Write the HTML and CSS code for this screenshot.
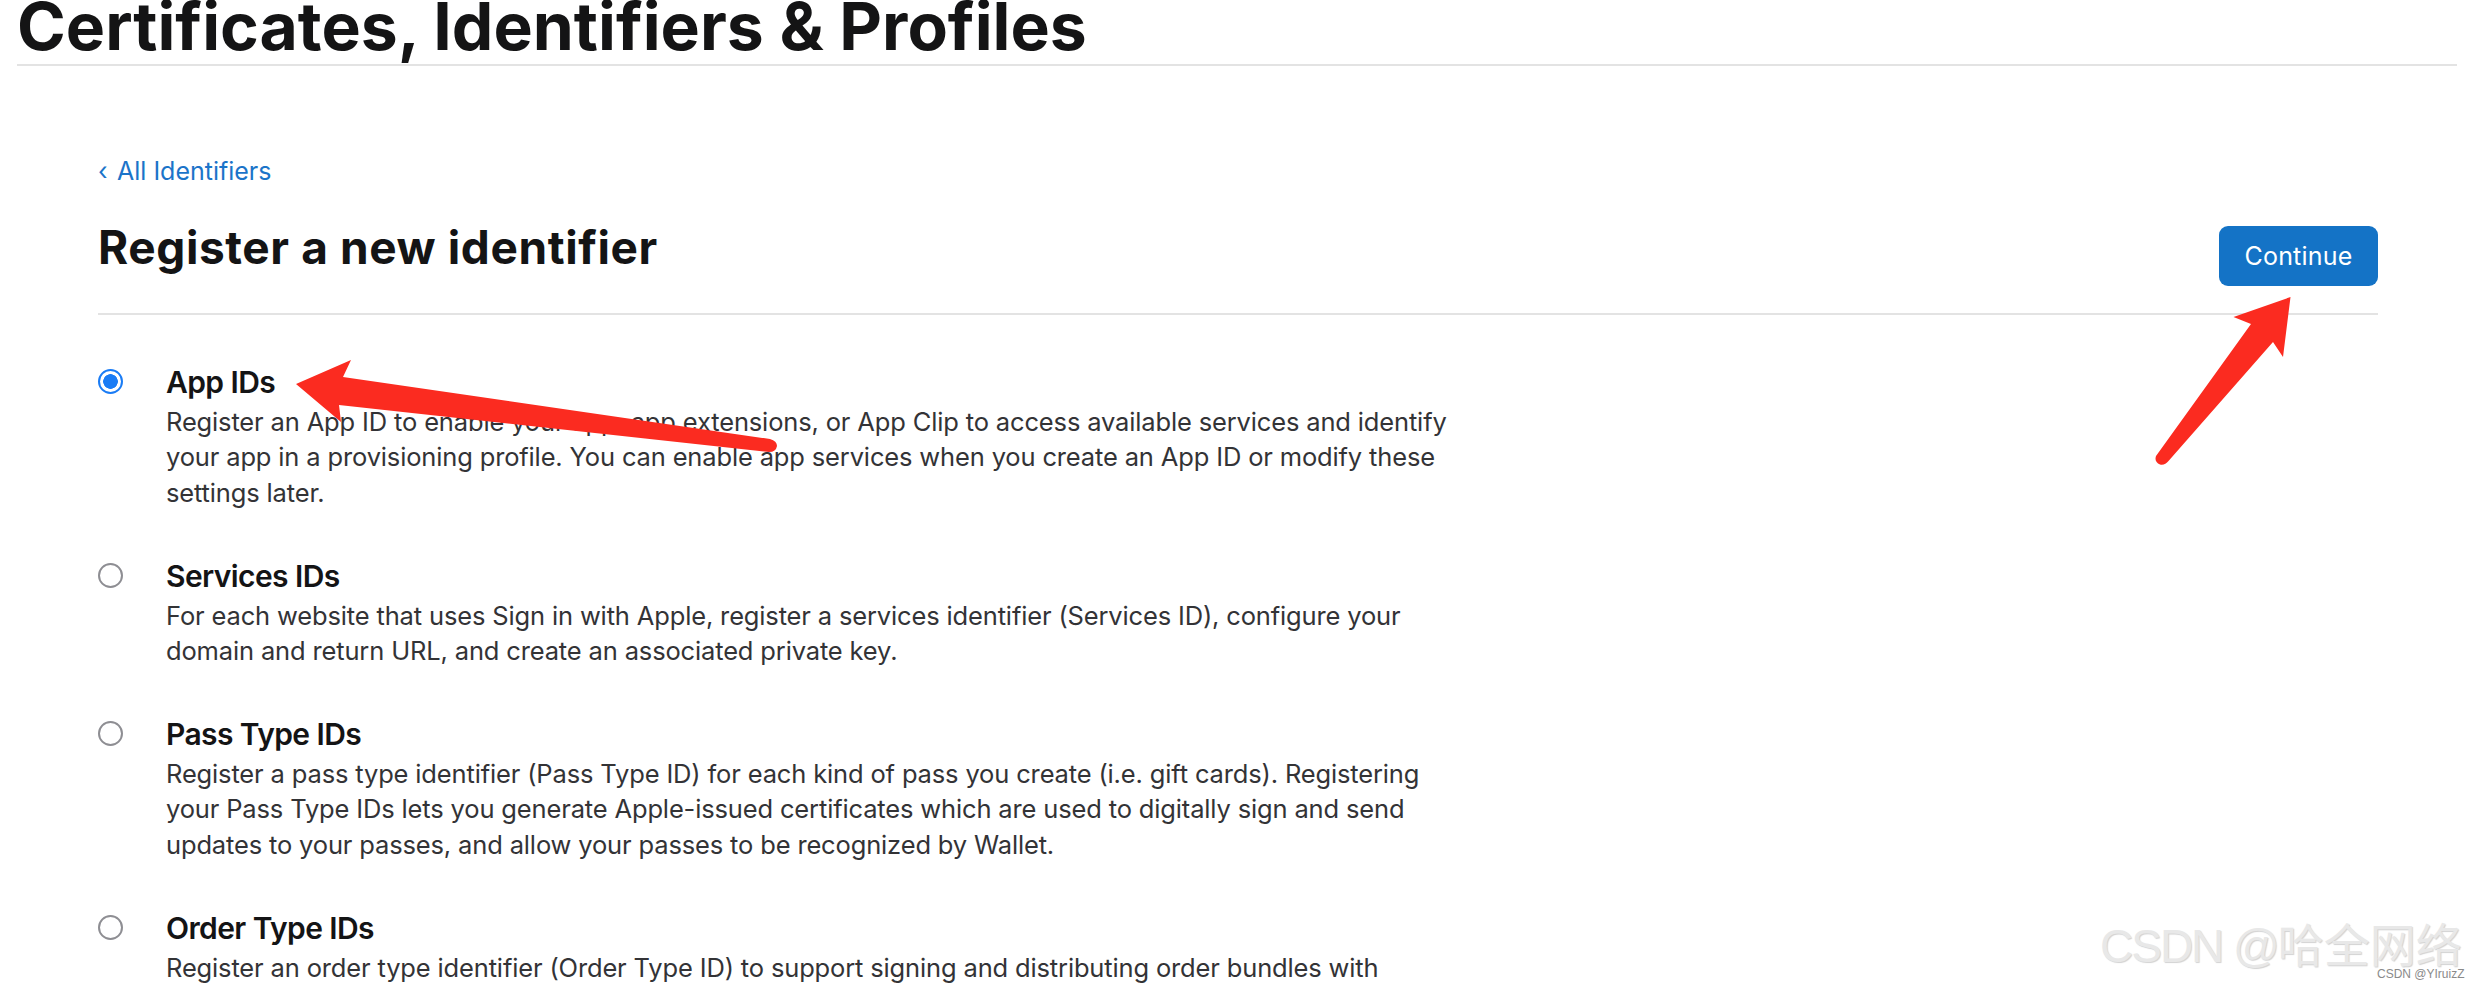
FILE: index.html
```html
<!DOCTYPE html>
<html lang="en">
<head>
<meta charset="utf-8">
<title>Certificates, Identifiers &amp; Profiles</title>
<link rel="stylesheet" href="styles.css">
</head>
<body>
<header class="topbar">
  <h1 class="page-title">Certificates, Identifiers &amp; Profiles</h1>
</header>
<main class="content">
  <a class="back-link" href="#"><span class="chev">&lsaquo;</span>All Identifiers</a>
  <div class="heading-row">
    <h2 class="heading">Register a new identifier</h2>
    <button class="btn-continue" type="button">Continue</button>
  </div>
  <ul class="options">
    <li class="option">
      <span class="radio checked"></span>
      <div class="option-body">
        <h3 class="option-title">App IDs</h3>
        <p class="option-desc">Register an App ID to enable your app, app extensions, or App Clip to access available services and identify<br>your app in a provisioning profile. You can enable app services when you create an App ID or modify these<br>settings later.</p>
      </div>
    </li>
    <li class="option">
      <span class="radio"></span>
      <div class="option-body">
        <h3 class="option-title">Services IDs</h3>
        <p class="option-desc">For each website that uses Sign in with Apple, register a services identifier (Services ID), configure your<br>domain and return URL, and create an associated private key.</p>
      </div>
    </li>
    <li class="option">
      <span class="radio"></span>
      <div class="option-body">
        <h3 class="option-title">Pass Type IDs</h3>
        <p class="option-desc">Register a pass type identifier (Pass Type ID) for each kind of pass you create (i.e. gift cards). Registering<br>your Pass Type IDs lets you generate Apple-issued certificates which are used to digitally sign and send<br>updates to your passes, and allow your passes to be recognized by Wallet.</p>
      </div>
    </li>
    <li class="option">
      <span class="radio"></span>
      <div class="option-body">
        <h3 class="option-title">Order Type IDs</h3>
        <p class="option-desc">Register an order type identifier (Order Type ID) to support signing and distributing order bundles with</p>
      </div>
    </li>
  </ul>
</main>

<svg class="annotations" width="2476" height="988" viewBox="0 0 2476 988" aria-hidden="true">
  <path class="arrow" d="M296,384 L351,360 L343,377 L770,439 Q777,441 777,446 Q776,452 769,452 L339,405 L341,422 Z"/>
  <path class="arrow" d="M2290.5,297 L2233.5,317 L2251,324 L2156,456 Q2154,462 2160,464.5 Q2165,465.5 2168.5,461 L2273,342 L2283,357 Z"/>
</svg>

<div class="watermark">
  <span class="wm-main"><span class="wm-latin">CSDN @</span>哈全网络</span>
  <span class="wm-sub">CSDN @YIruizZ</span>
</div>
</body>
</html>
```

FILE: styles.css
```css
html, body {
  margin: 0;
  padding: 0;
  background: #ffffff;
}

body {
  font-family: "Inter", "Noto Sans", sans-serif;
  color: #1d1d1f;
  overflow: hidden;
  height: 988px;
  position: relative;
}

.topbar {
  margin: 0 19px 0 17px;
  padding-bottom: 5px;
  border-bottom: 2px solid #e3e3e3;
}

.page-title {
  margin: -7px 0 0 0;
  font-size: 66px;
  line-height: 66px;
  font-weight: 700;
  letter-spacing: 0;
  color: #141415;
}

.content {
  margin: 0 98px 0 98px;
}

.back-link {
  display: block;
  margin-top: 90px;
  font-size: 25px;
  line-height: 30px;
  color: #1b74c9;
  text-decoration: none;
  letter-spacing: 0;
}

.chev {
  display: inline-block;
  width: 19px;
}

.heading-row {
  display: flex;
  justify-content: space-between;
  align-items: flex-start;
  margin-top: 34px;
  padding-bottom: 27px;
  border-bottom: 2px solid #e3e3e3;
}

.heading {
  margin: 0;
  font-size: 46px;
  line-height: 54px;
  font-weight: 700;
  letter-spacing: 0.6px;
  color: #141415;
}

.btn-continue {
  margin-top: 6px;
  width: 159px;
  height: 60px;
  border: none;
  border-radius: 9px;
  background: #1473c6;
  color: #ffffff;
  font-family: "Inter", "Noto Sans", sans-serif;
  font-size: 25px;
  font-weight: 400;
  letter-spacing: 0.2px;
  padding: 0;
}

.options {
  list-style: none;
  margin: 46px 0 0 0;
  padding: 0;
  display: flex;
  flex-direction: column;
  gap: 44.5px;
}

.option {
  display: grid;
  grid-template-columns: 25px 1fr;
  column-gap: 43px;
  align-items: start;
}

.radio {
  box-sizing: border-box;
  width: 25px;
  height: 25px;
  margin-top: 8px;
  border-radius: 50%;
  border: 2px solid #8e8e93;
  background: #ffffff;
}

.radio.checked {
  border: 2.5px solid #1a7cf5;
  background: radial-gradient(circle, #1a7cf5 0, #1a7cf5 7px, #ffffff 7.6px);
}

.option-title {
  margin: 0;
  font-size: 30px;
  line-height: 43px;
  font-weight: 600;
  letter-spacing: -0.6px;
  color: #141415;
}

.option-desc {
  margin: 0;
  font-size: 25.5px;
  line-height: 35.4px;
  font-weight: 400;
  letter-spacing: -0.15px;
  color: #333336;
  white-space: nowrap;
}

.annotations {
  position: absolute;
  left: 0;
  top: 0;
  pointer-events: none;
}

.arrow {
  fill: #fb2b20;
}

.watermark {
  position: absolute;
  left: 0;
  top: 0;
  width: 2476px;
  height: 988px;
  pointer-events: none;
}

.wm-main {
  position: absolute;
  left: 2100px;
  top: 923px;
  font-family: "Liberation Sans", "Noto Sans CJK SC", sans-serif;
  font-size: 46px;
  line-height: 46px;
  color: #e8e8e8;
  text-shadow: 1px 1px 1px rgba(0, 0, 0, 0.18);
  white-space: nowrap;
}

.wm-latin {
  letter-spacing: -2px;
}

.wm-sub {
  position: absolute;
  left: 2377px;
  top: 968px;
  font-family: "Liberation Sans", sans-serif;
  font-size: 12px;
  line-height: 12px;
  color: #8a8a8a;
  text-shadow: 0 0 1px #ffffff;
  white-space: nowrap;
}
```
